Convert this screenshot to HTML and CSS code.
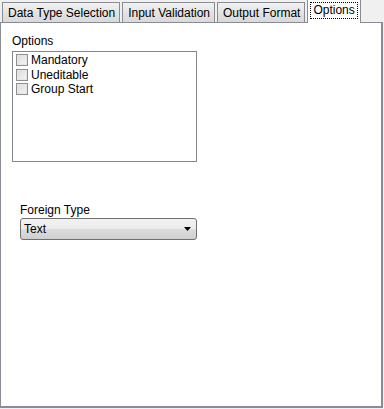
FILE: index.html
```html
<!DOCTYPE html>
<html lang="en">
<head>
    <meta charset="UTF-8">
    <title>Options</title>
    <link rel="stylesheet" href="styles.css">
</head>
<body>
    <div class="tabs">
        <div class="tab">Data Type Selection</div>
        <div class="tab">Input Validation</div>
        <div class="tab">Output Format</div>
        <div class="tab active"><span class="focus">Options</span></div>
    </div>
    <div class="panel">
        <div class="label">Options</div>
        <div class="listbox">
            <label class="item"><span class="check"></span>Mandatory</label>
            <label class="item"><span class="check"></span>Uneditable</label>
            <label class="item"><span class="check"></span>Group Start</label>
        </div>

        <div class="foreign">
            <div class="label">Foreign Type</div>
            <div class="combo">
                <span>Text</span>
                <svg width="8" height="4" viewBox="0 0 8 4"><polygon points="0,0 7,0 3.5,4" fill="#000"/></svg>
            </div>
        </div>
    </div>
</body>
</html>
```

FILE: styles.css
```css
body {
    margin: 0;
    width: 384px;
    height: 409px;
    background: #f0f0f0;
    font-family: "Liberation Sans", Arial, sans-serif;
    font-size: 12px;
    color: #000;
}
.tabs {
    display: flex;
    align-items: flex-end;
    height: 22px;
    padding-left: 2px;
    gap: 2px;
}
.tab {
    height: 19px;
    padding: 0 4px 0 5px;
    line-height: 20px;
    border: 1px solid #898c95;
    border-bottom: none;
    background: linear-gradient(#f2f2f2, #e3e3e3 50%, #d9d9d9);
    white-space: nowrap;
}
.tab.active {
    height: 23px;
    line-height: 20px;
    background: #fff;
    padding: 0 2px;
    margin-bottom: -1px;
    position: relative;
    z-index: 1;
}
.focus {
    display: inline-block;
    line-height: 15px;
    padding: 0 2px;
    border: 1px dotted #000;
}
.panel {
    width: 383px;
    height: 386px;
    background: #fff;
    border: 1px solid #898c95;
    border-right-width: 2px;
    border-bottom-width: 2px;
    padding: 11px 0 0 11px;
    box-sizing: border-box;
}
.label {
    line-height: 14px;
    margin-bottom: 3px;
}
.listbox {
    width: 185px;
    height: 111px;
    border: 1px solid #828790;
    padding: 1px 3px;
    box-sizing: border-box;
}
.item {
    display: flex;
    align-items: center;
    height: 14.5px;
}
.check {
    width: 12px;
    height: 12px;
    box-sizing: border-box;
    border: 1px solid #8f8f8f;
    background: linear-gradient(135deg, #dcdcdc, #f4f4f4);
    box-shadow: inset 0 0 0 1px #e6e6e6;
    margin-right: 3px;
}
.foreign {
    margin: 40px 0 0 8px;
}
.foreign .label {
    line-height: 16px;
    margin-bottom: 0;
}
.combo {
    width: 177px;
    height: 22px;
    box-sizing: border-box;
    border: 1px solid #707070;
    border-radius: 3px;
    background: linear-gradient(#f2f2f2, #ebebeb 50%, #dddddd 50%, #cfcfcf);
    display: flex;
    align-items: center;
    justify-content: space-between;
    padding: 0 4px 0 3px;
}
```
